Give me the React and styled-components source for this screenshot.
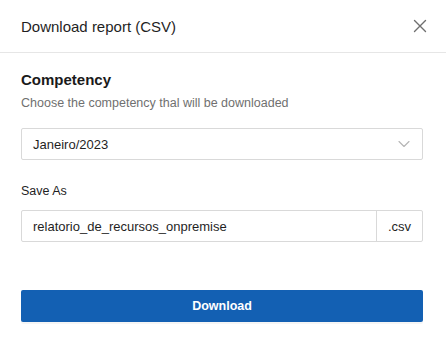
import styled, { createGlobalStyle } from 'styled-components'

const GlobalStyle = createGlobalStyle`
  html, body {
    margin: 0;
    padding: 0;
    background: #ffffff;
  }

  body {
    font-family: "Liberation Sans", Arial, sans-serif;
    color: #1f1f1f;
  }
`

function CloseIcon() {
  return (
    <svg width='14' height='14' viewBox='0 0 14 14' fill='none'>
      <path d='M1.5 1.5L12.5 12.5M12.5 1.5L1.5 12.5' stroke='#6f6f6f' strokeWidth='1.4' strokeLinecap='round' />
    </svg>
  )
}

function ChevronIcon() {
  return (
    <svg width='12' height='8' viewBox='0 0 12 8' fill='none'>
      <path d='M1 1.5L6 6.5L11 1.5' stroke='#b5b5b5' strokeWidth='1.1' strokeLinecap='round' strokeLinejoin='round' />
    </svg>
  )
}

function App() {
  return (
    <>
      <GlobalStyle />
      <Modal>
        <Header>
          <Title>Download report (CSV)</Title>
          <CloseButton aria-label='Fechar'>
            <CloseIcon />
          </CloseButton>
        </Header>

        <Body>
          <SectionTitle>Competency</SectionTitle>
          <Description>Choose the competency thal will be downloaded</Description>

          <Select>
            <FieldText>Janeiro/2023</FieldText>
            <ChevronIcon />
          </Select>

          <Label>Save As</Label>
          <InputGroup>
            <FieldText>relatorio_de_recursos_onpremise</FieldText>
            <Suffix>.csv</Suffix>
          </InputGroup>

          <Button>Download</Button>
        </Body>
      </Modal>
    </>
  )
}

const Modal = styled.div`
  width: 446px;
  height: 354px;
  display: flex;
  flex-direction: column;
  background: #ffffff;
`

const Header = styled.div`
  display: flex;
  height: 53px;
  box-sizing: border-box;
  padding: 0 19px 0 21px;
  align-items: center;
  justify-content: space-between;
  border-bottom: 1px solid #e6e6e6;
`

const Title = styled.h2`
  margin: 0;
  font-size: 15px;
  font-weight: 400;
  color: #1f1f1f;
`

const CloseButton = styled.button`
  display: flex;
  padding: 0;
  border: none;
  background: transparent;
  cursor: pointer;
`

const Body = styled.div`
  display: flex;
  flex-direction: column;
  padding: 17px 23px 0 21px;
`

const SectionTitle = styled.h3`
  margin: 0;
  font-size: 15px;
  font-weight: 700;
  line-height: 20px;
  color: #1a1a1a;
`

const Description = styled.p`
  margin: 4px 0 0;
  font-size: 12.5px;
  line-height: 18px;
  color: #707070;
`

const Field = styled.div`
  display: flex;
  height: 32px;
  box-sizing: border-box;
  align-items: center;
  border: 1px solid #d9d9d9;
  border-radius: 2px;
  background: #ffffff;
`

const Select = styled(Field)`
  margin-top: 16px;
  padding: 0 12px 0 11px;
  justify-content: space-between;
`

const InputGroup = styled(Field)`
  margin-top: 10px;
  padding-left: 11px;
`

const FieldText = styled.span`
  flex: 1;
  font-size: 13px;
  color: #1f1f1f;
`

const Suffix = styled.span`
  display: flex;
  height: 100%;
  padding: 0 11px;
  align-items: center;
  border-left: 1px solid #d9d9d9;
  font-size: 13px;
  color: #1f1f1f;
`

const Label = styled.span`
  margin-top: 22px;
  font-size: 12.5px;
  line-height: 18px;
  color: #1f1f1f;
`

const Button = styled.button`
  height: 32px;
  margin-top: 48px;
  border: none;
  border-radius: 2px;
  background: #1360b3;
  color: #ffffff;
  font-family: inherit;
  font-size: 12.5px;
  font-weight: 700;
  box-shadow: 0 2px 0 rgba(0, 0, 0, 0.04);
  cursor: pointer;
`

export default App
